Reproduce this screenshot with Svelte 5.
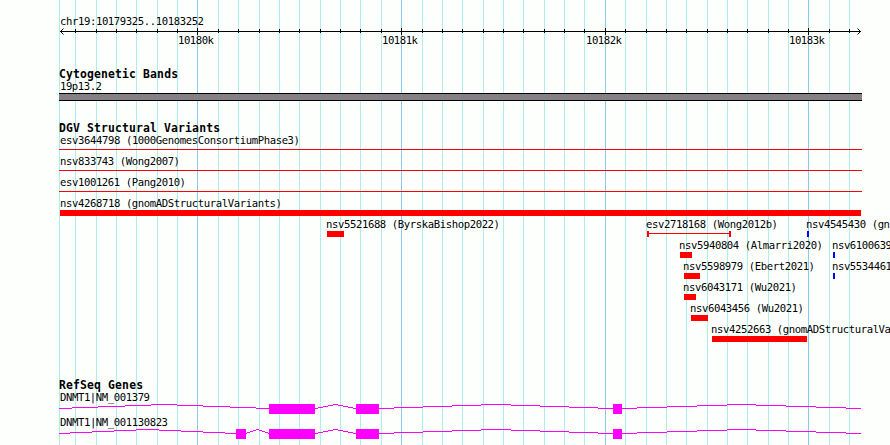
<script>
  const WIDTH = 890;
  const LEFT = 59;
  const RIGHT = 861;

  const minor = [
    59, 75, 96, 116, 136, 157, 177, 218, 238, 259, 279, 299, 320, 340, 360, 381,
    422, 442, 462, 483, 503, 523, 544, 564, 584, 625, 646, 666, 686, 707, 727,
    747, 768, 788, 829, 849,
  ];
  const major = [
    { x: 197, label: '10180k', labelX: 178 },
    { x: 401, label: '10181k', labelX: 382 },
    { x: 605, label: '10182k', labelX: 586 },
    { x: 808, label: '10183k', labelX: 789 },
  ];

  const ROW = 21;
  const variants = [
    { row: 0, name: 'esv3644798 (1000GenomesConsortiumPhase3)', x: 59, end: 862, kind: 'line' },
    { row: 1, name: 'nsv833743 (Wong2007)', x: 59, end: 862, kind: 'line' },
    { row: 2, name: 'esv1001261 (Pang2010)', x: 59, end: 862, kind: 'line' },
    { row: 3, name: 'nsv4268718 (gnomADStructuralVariants)', x: 60, end: 861 },
    { row: 4, name: 'nsv5521688 (ByrskaBishop2022)', x: 327, end: 344 },
    { row: 4, name: 'esv2718168 (Wong2012b)', x: 647, end: 731, kind: 'range' },
    { row: 4, name: 'nsv4545430 (gn', x: 807, end: 809, kind: 'gain' },
    { row: 5, name: 'nsv5940804 (Almarri2020)', x: 680, end: 692 },
    { row: 5, name: 'nsv6100639', x: 833, end: 835, kind: 'gain' },
    { row: 6, name: 'nsv5598979 (Ebert2021)', x: 684, end: 700 },
    { row: 6, name: 'nsv5534461', x: 833, end: 835, kind: 'gain' },
    { row: 7, name: 'nsv6043171 (Wu2021)', x: 684, end: 696 },
    { row: 8, name: 'nsv6043456 (Wu2021)', x: 691, end: 708 },
    { row: 9, name: 'nsv4252663 (gnomADStructuralVa', x: 712, end: 807 },
  ];

  const genes = [
    { name: 'DNMT1|NM_001379', exons: [[269, 315], [356, 379], [613, 622]] },
    { name: 'DNMT1|NM_001130823', exons: [[236, 246], [269, 315], [356, 379], [613, 622]] },
  ];

  function labelX(v) {
    return v.x < 61 ? 60 : v.x - 1;
  }

  // Each intron climbs four pixels to its middle and comes back down
  function intronSteps(exons) {
    const segments = [];
    let start = LEFT;
    for (const [a, b] of [...exons, [RIGHT, RIGHT]]) {
      const step = (a - start) / 8;
      let from = start;
      for (let k = 0; k < 9; k++) {
        const to = k === 8 ? a : Math.round(start + step * (k + 0.5));
        segments.push({ x: from, width: to - from, rise: 4 - Math.abs(4 - k) });
        from = to;
      }
      start = b;
    }
    return segments;
  }
</script>

{#snippet label(x, y, text)}
  <text class="label" {x} {y} textLength={text.length * 6}>{text}</text>
{/snippet}

{#snippet title(y, text)}
  <text class="title" x={LEFT} {y} textLength={text.length * 7}>{text}</text>
{/snippet}

<main class="browser">
  <svg class="grid" width={WIDTH} height="445">
    {#each minor as x}
      <rect class="minor" {x} y="0" width="1" height="445" />
    {/each}
    {#each major as m}
      <rect class="major" x={m.x} y="0" width="1" height="445" />
    {/each}
  </svg>

  <svg class="track" width={WIDTH} height="60">
    {@render label(60, 25, 'chr19:10179325..10183252')}
    <rect x="60" y="31" width="801" height="1" />
    <path class="arrow" d="M63.5 28.5L60.5 31.5L63.5 34.5M857.5 28.5L860.5 31.5L857.5 34.5" />
    {#each minor.slice(1) as x}
      <rect {x} y="29" width="1" height="4" />
    {/each}
    {#each major as m}
      <rect x={m.x} y="28" width="1" height="7" />
      {@render label(m.labelX, 44, m.label)}
    {/each}
  </svg>

  <svg class="track" width={WIDTH} height="50">
    {@render title(18, 'Cytogenetic Bands')}
    {@render label(60, 30, '19p13.2')}
    <rect x={LEFT} y="33" width="803" height="8" />
    <rect class="band" x={LEFT} y="34" width="803" height="6" />
  </svg>

  <svg class="track" width={WIDTH} height="260">
    {@render title(22, 'DGV Structural Variants')}
    {#each variants as v}
      {@const y = 37 + v.row * ROW}
      {@const width = v.end - v.x}
      {@render label(labelX(v), y - 3, v.name)}
      {#if v.kind === 'line'}
        <rect class="loss" x={v.x} y={y + 2} {width} height="1" />
      {:else if v.kind === 'range'}
        <rect class="loss" x={v.x} y={y + 2} {width} height="1" />
        <rect class="loss" x={v.x} {y} width="2" height="6" />
        <rect class="loss" x={v.end - 2} {y} width="2" height="6" />
      {:else}
        <rect class={v.kind === 'gain' ? 'gain' : 'loss'} x={v.x} {y} {width} height="6" />
      {/if}
    {/each}
  </svg>

  <svg class="track" width={WIDTH} height="75">
    {@render title(19, 'RefSeq Genes')}
    {#each genes as gene, i}
      {@const y = 34 + i * 25}
      {@render label(60, y - 3, gene.name)}
      {#each intronSteps(gene.exons) as s}
        <rect class="gene" x={s.x} y={y + 4 - s.rise} width={s.width} height="1" />
      {/each}
      {#each gene.exons as [start, end]}
        <rect class="gene" x={start} {y} width={end - start} height="10" />
      {/each}
    {/each}
  </svg>
</main>

<style>
  :global(body) {
    margin: 0;
  }

  .browser {
    position: relative;
    display: flex;
    flex-direction: column;
    width: 890px;
    height: 445px;
    overflow: hidden;
    background: #fdfffd;
  }

  .grid {
    position: absolute;
    inset: 0;
  }

  .track {
    position: relative;
    display: block;
    flex: none;
  }

  .minor {
    fill: #afeeee;
  }

  .major {
    fill: #87ceeb;
  }

  .label {
    font-family: 'DejaVu Sans Mono', monospace;
    font-size: 10.6px;
    white-space: pre;
  }

  .title {
    font-family: 'DejaVu Sans Mono', monospace;
    font-size: 11.4px;
    font-weight: 700;
    white-space: pre;
  }

  .arrow {
    fill: none;
    stroke: #000;
    stroke-width: 1;
  }

  .band {
    fill: #858085;
  }

  .loss {
    fill: #f00;
  }

  .gain {
    fill: #00f;
  }

  .gene {
    fill: #f0f;
  }
</style>
